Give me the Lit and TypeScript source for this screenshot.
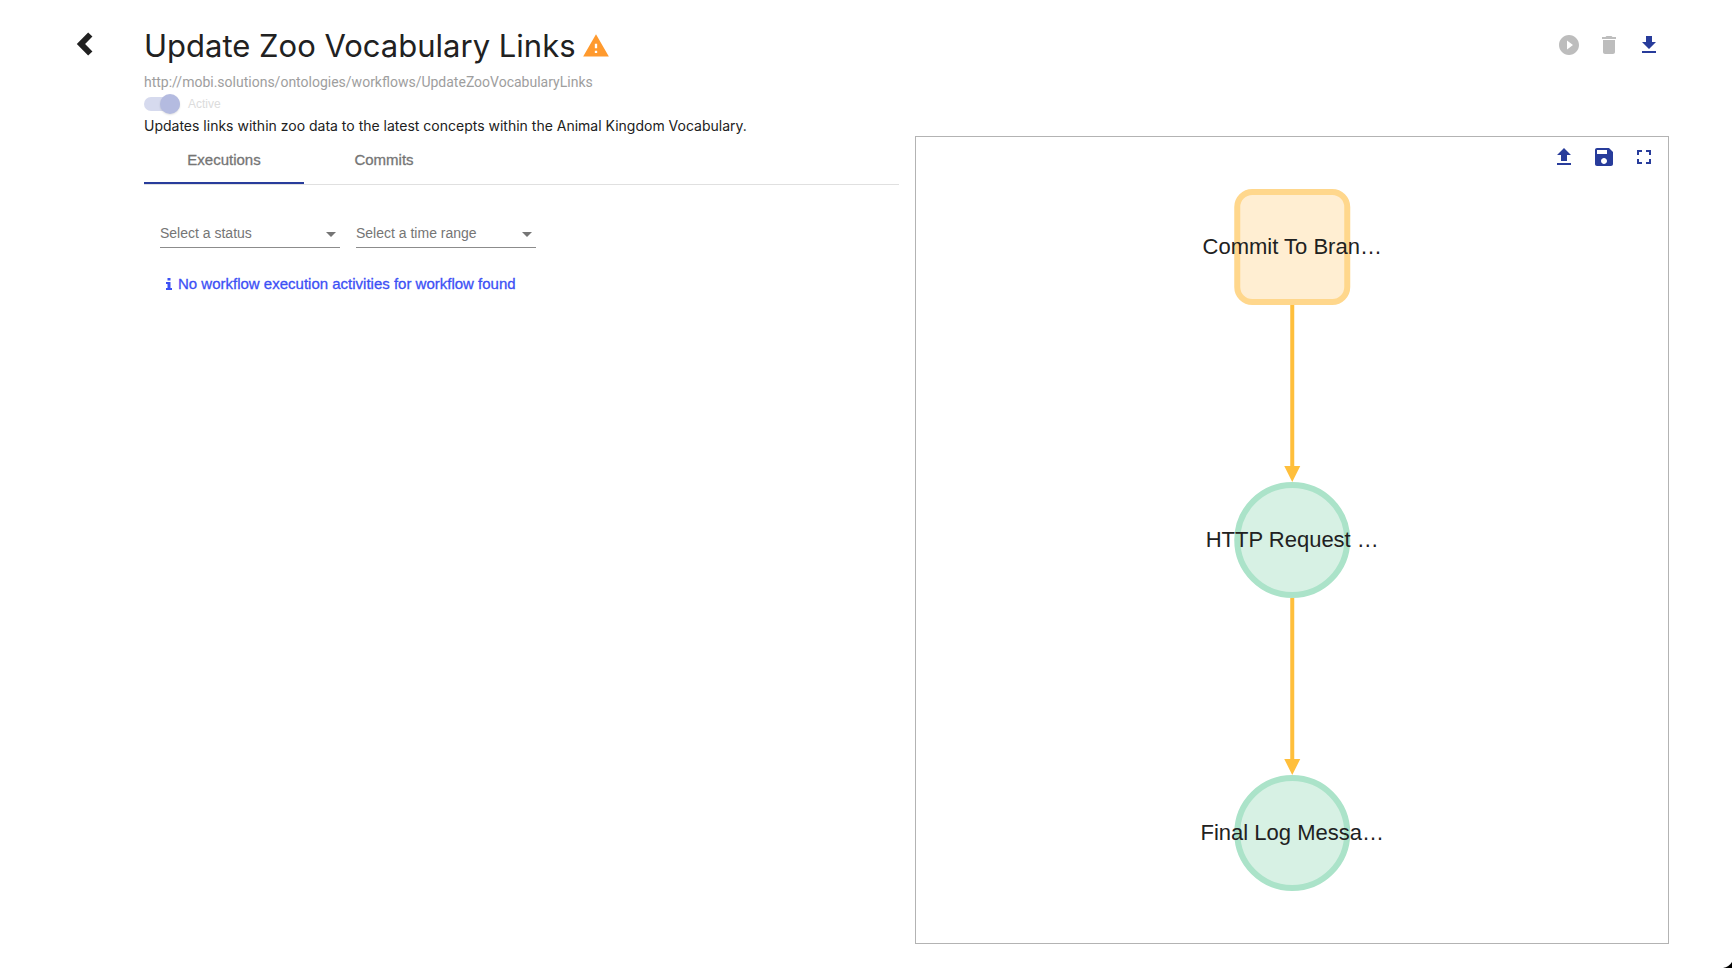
import { LitElement, html, svg, css } from "lit";
import { customElement, property, state } from "lit/decorators.js";
import { classMap } from "lit/directives/class-map.js";

const ICONS: Record<string, string> = {
  play: "M12 2C6.48 2 2 6.48 2 12s4.48 10 10 10 10-4.48 10-10S17.52 2 12 2zm-2 14.5v-9l6 4.5-6 4.5z",
  trash: "M6 19c0 1.1.9 2 2 2h8c1.1 0 2-.9 2-2V7H6v12zM19 4h-3.500l-1-1h-5l-1 1H5v2h14V4z",
  download: "M19 9h-4V3H9v6H5l7 7 7-7zM5 18v2h14v-2H5z",
  upload: "M9 16h6v-6h4l-7-7-7 7h4zm-4 2h14v2H5z",
  save: "M17 3H5c-1.110 0-2 .9-2 2v14c0 1.100.890 2 2 2h14c1.100 0 2-.9 2-2V7l-4-4zm-5 16c-1.660 0-3-1.340-3-3s1.340-3 3-3 3 1.340 3 3-1.340 3-3 3zm3-10H5V5h10v4z",
  fullscreen: "M7 14H5v5h5v-2H7v-3zm-2-4h2V7h3V5H5v5zm12 7h-3v2h5v-5h-2v3zM14 5v2h3v3h2V5h-5z",
  warning: "M1 21h22L12 2 1 21zm12-3h-2v-2h2v2zm0-4h-2v-4h2v4z",
};

@customElement("icon-button")
class IconButton extends LitElement {
  @property() icon = "";
  @property() label = "";
  @property({ type: Boolean }) disabled = false;

  static styles = css`
    :host { display: block; }
    .btn {
      display: flex; align-items: center; justify-content: center;
      width: 40px; height: 40px; padding: 0; border: 0;
      background: none; color: #283c9b; cursor: pointer;
    }
    .btn:disabled { color: #bdbdbd; cursor: default; }
    .glyph { width: 24px; height: 24px; fill: currentColor; }
  `;

  render() {
    return html`<button class="btn" aria-label=${this.label} ?disabled=${this.disabled}>
      <svg class="glyph" viewBox="0 0 24 24"><path d=${ICONS[this.icon]}></path></svg>
    </button>`;
  }
}

type Step = { label: string; y: number; kind: "action" | "trigger" };

@customElement("workflow-graph")
class WorkflowGraph extends LitElement {
  steps: Step[] = [
    { label: "Commit To Bran…", y: 110, kind: "trigger" },
    { label: "HTTP Request …", y: 403, kind: "action" },
    { label: "Final Log Messa…", y: 696, kind: "action" },
  ];

  static styles = css`
    :host { display: grid; contain: size; }
    .canvas { display: block; width: 100%; height: 100%; }
    .trigger { fill: #ffeed2; stroke: #ffd78c; stroke-width: 6px; }
    .action { fill: #d7f1e4; stroke: #abe3c9; stroke-width: 6px; }
    .edge { stroke: #ffbf3c; stroke-width: 4px; }
    .arrow { fill: #ffbf3c; }
    .label {
      font: 22px "Liberation Sans", Arial, sans-serif;
      fill: #212121; text-anchor: middle;
    }
  `;

  render() {
    const cx = 376;
    return html`<svg class="canvas" viewBox="0 0 752 806" role="img" aria-label="Workflow steps">
      ${this.steps.slice(1).map((s, i) => {
        const tip = s.y - 58;
        return svg`<line class="edge" x1=${cx} x2=${cx} y1=${this.steps[i].y + 58} y2=${tip - 14}></line>
          <path class="arrow" d="M${cx - 8} ${tip - 16}h16l-8 16z"></path>`;
      })}
      ${this.steps.map((s) => svg`
        ${s.kind === "trigger"
          ? svg`<rect class="trigger" x=${cx - 55} y=${s.y - 55} width="110" height="110" rx="15"></rect>`
          : svg`<circle class="action" cx=${cx} cy=${s.y} r="55"></circle>`}
        <text class="label" x=${cx} y=${s.y + 7}>${s.label}</text>`)}
    </svg>`;
  }
}

@customElement("app-root")
class AppRoot extends LitElement {
  @state() private tab = "Executions";

  static styles = css`
    :host {
      display: block; box-sizing: border-box; min-height: 100vh;
      background: #fff; color: #212121;
      font: 14px/20px "Liberation Sans", Arial, sans-serif;
    }
    .page {
      display: grid; box-sizing: border-box; min-height: 100vh;
      grid-template-columns: 64px minmax(0, 1fr) minmax(0, 1fr);
      grid-template-rows: auto minmax(400px, 1fr);
      column-gap: 16px;
      padding: 24px 63px 24px 64px;
    }
    .back {
      display: flex; align-items: center; justify-content: center;
      width: 40px; height: 40px; padding: 0; border: 0; background: none; color: #212121;
    }
    .back svg { width: 18px; height: 26px; }
    .summary { grid-column: 2 / 4; display: flex; justify-content: space-between; height: 112px; }
    .intro { font-family: Inter, sans-serif; }
    .title { display: flex; align-items: center; gap: 6px; margin: 0; font-size: 31px; line-height: 44px; font-weight: 400; }
    .title svg { width: 28px; height: 28px; fill: #ff9a2e; }
    .iri { margin: 4px 0 0; color: #9e9e9e; font-family: Roboto, sans-serif; }
    .toggle { display: flex; align-items: center; gap: 8px; height: 24px; font: 12px/24px "Liberation Sans", Arial, sans-serif; color: #dcdcdc; }
    .switch { appearance: none; position: relative; width: 36px; height: 14px; margin: 0; border-radius: 7px; background: #d6daee; }
    .switch::after {
      content: ""; position: absolute; right: 0; top: -3px; width: 20px; height: 20px;
      border-radius: 50%; background: #b4bbe0; box-shadow: 0 1px 2px rgba(0, 0, 0, 0.12);
    }
    .about { margin: 0; }
    .actions { display: flex; align-items: center; height: 42px; }
    .details { grid-column: 2; }
    .tabs { display: flex; border-bottom: 1px solid #e0e0e0; }
    .tab {
      width: 160px; height: 48px; padding: 2px 0 0; border: 0; border-bottom: 2px solid transparent;
      background: none; font: inherit; font-size: 15px; color: #757575;
      -webkit-text-stroke: 0.3px currentColor;
    }
    .tab.active { border-color: #283c9b; }
    .filters { display: flex; gap: 16px; padding: 32px 16px 0; }
    .field { position: relative; display: block; width: 180px; }
    .select {
      appearance: none; display: block; width: 100%; height: 31px; padding: 2px 0 0; border: 0;
      border-bottom: 1px solid #8c8c8c; border-radius: 0; background: none;
      font: inherit; color: #757575;
    }
    .caret { position: absolute; right: 4px; top: 15px; border: 5px solid transparent; border-top-color: #757575; border-bottom: 0; pointer-events: none; }
    .notice {
      display: flex; align-items: center; gap: 6px; margin: 26px 22px 0; color: #3c50f5;
      font-size: 15px; -webkit-text-stroke: 0.3px currentColor;
    }
    .notice svg { width: 6px; height: 12px; fill: currentColor; }
    .viewer { grid-column: 3; display: grid; border: 1px solid #b3b3b3; }
    .viewer > * { grid-area: 1 / 1; }
    .tools { display: flex; align-self: start; justify-self: end; padding-right: 4px; z-index: 1; }
    .corner { position: fixed; right: 0; bottom: 0; width: 9px; height: 6px; fill: #000; }
  `;

  render() {
    return html`
      <main class="page">
        <nav><button class="back" aria-label="Back">
          <svg viewBox="0 0 18 26"><path d="M15.300 3.500 6 13l9.300 9.500" fill="none" stroke="currentColor" stroke-width="6"></path></svg>
        </button></nav>
        <header class="summary">
          <div class="intro">
            <h1 class="title">Update Zoo Vocabulary Links
              <svg viewBox="0 0 24 24"><path d=${ICONS.warning}></path></svg></h1>
            <p class="iri">http://mobi.solutions/ontologies/workflows/UpdateZooVocabularyLinks</p>
            <label class="toggle"><input class="switch" type="checkbox" role="switch" checked disabled />Active</label>
            <p class="about">Updates links within zoo data to the latest concepts within the Animal Kingdom Vocabulary.</p>
          </div>
          <div class="actions">
            <icon-button icon="play" label="Run workflow" disabled></icon-button>
            <icon-button icon="trash" label="Delete workflow" disabled></icon-button>
            <icon-button icon="download" label="Download workflow"></icon-button>
          </div>
        </header>
        <section class="details">
          <div class="tabs" role="tablist">
            ${["Executions", "Commits"].map((name) => html`<button role="tab"
              class=${classMap({ tab: true, active: this.tab === name })}
              aria-selected=${this.tab === name}
              @click=${() => (this.tab = name)}>${name}</button>`)}
          </div>
          <div class="filters">
            ${["Select a status", "Select a time range"].map((name) => html`<label class="field">
              <select class="select" aria-label=${name}><option>${name}</option></select>
              <span class="caret"></span></label>`)}
          </div>
          <p class="notice">
            <svg viewBox="0 0 6 12"><path d="M1.500 0h3v2.500h-3zM0 4h4.500v6H6v2H0v-2h1.500V6H0z"></path></svg>
            No workflow execution activities for workflow found</p>
        </section>
        <section class="viewer">
          <workflow-graph></workflow-graph>
          <div class="tools">
            <icon-button icon="upload" label="Upload changes"></icon-button>
            <icon-button icon="save" label="Save"></icon-button>
            <icon-button icon="fullscreen" label="Full screen"></icon-button>
          </div>
        </section>
      </main>
      <svg class="corner" viewBox="0 0 9 6"><path d="M9 0v6H0Q6 5 9 0z"></path></svg>
    `;
  }
}
